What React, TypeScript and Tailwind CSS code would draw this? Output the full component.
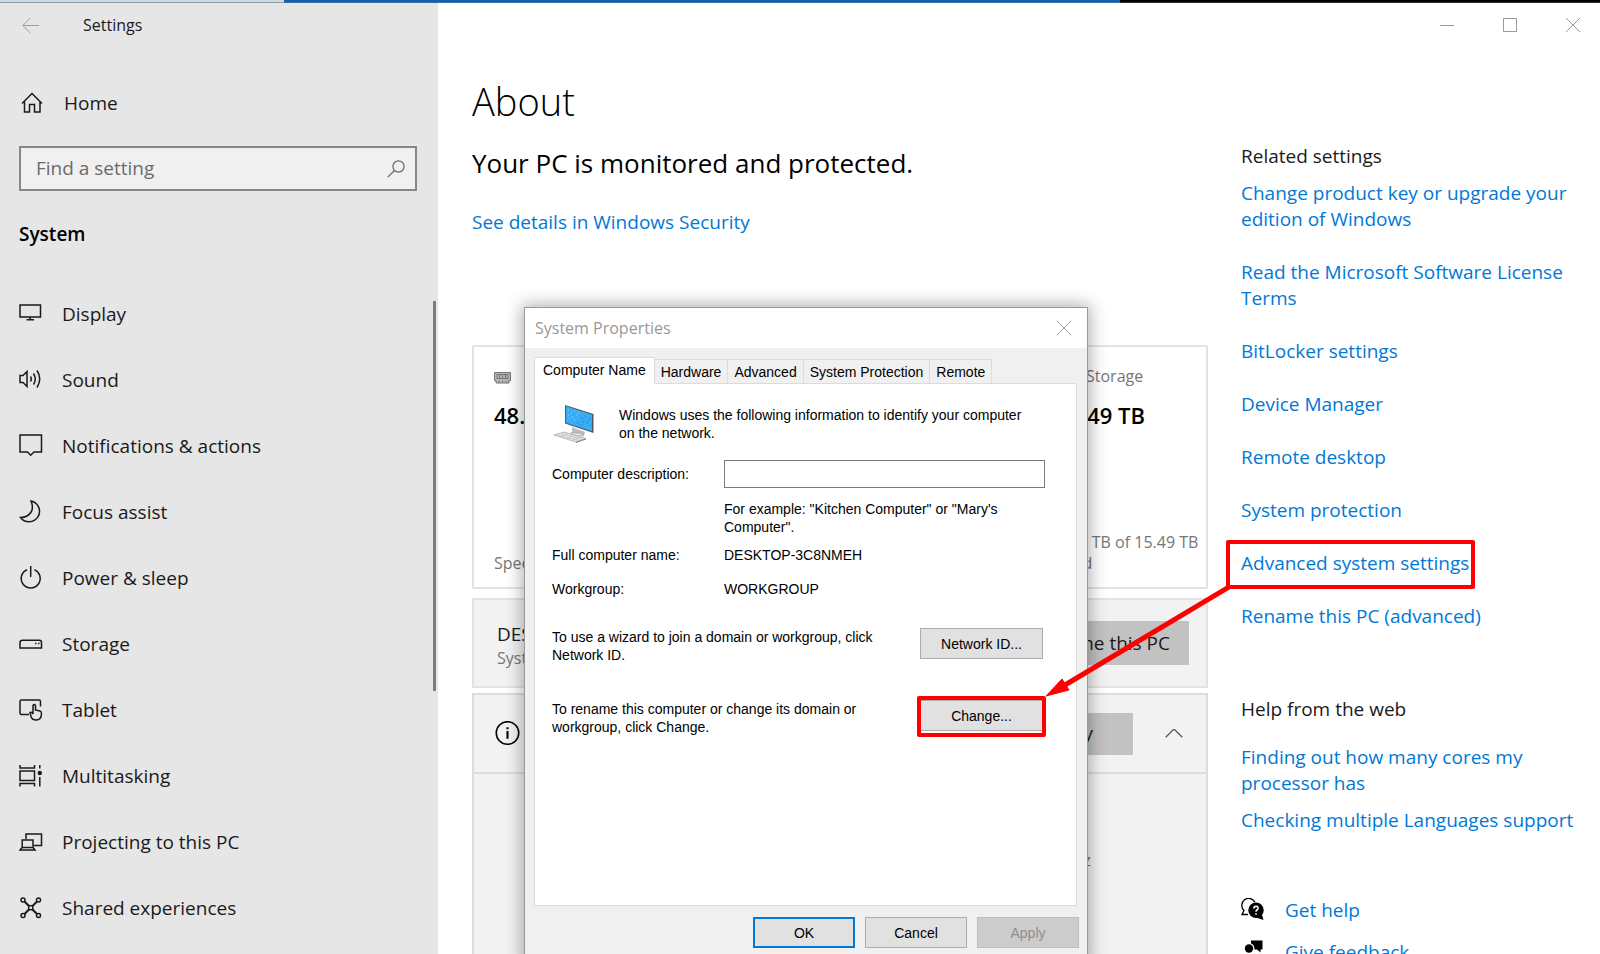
import type { ReactNode } from "react";

const stroke = {
  fill: "none",
  stroke: "currentColor",
  strokeWidth: 1.5,
} as const;

function Icon({ children, size = "size-6" }: { children: ReactNode; size?: string }) {
  return (
    <svg viewBox="0 0 24 24" className={`${size} shrink-0`} aria-hidden="true" {...stroke}>
      {children}
    </svg>
  );
}

const navItems: { label: string; icon: ReactNode }[] = [
  {
    label: "Display",
    icon: <path d="M1 3H21.500V15H1ZM11.200 15V17.500M7.500 17.700H15" />,
  },
  {
    label: "Sound",
    icon: (
      <path d="M1 7.500H4L8 3.500V18.500L4 14.500H1ZM11.500 8.500Q13 11 11.500 13.500M14.500 5.500Q18 11 14.500 16.500M18 2.500Q23.500 11 18 19.500" />
    ),
  },
  {
    label: "Notifications & actions",
    icon: <path d="M1 1H22.500V18H15L11.700 21.300L8.500 18H1Z" />,
  },
  {
    label: "Focus assist",
    icon: <path d="M12 1A10.500 10.500 0 1 1 1.500 17.500Q9 17.500 12.500 11.500Q14.500 6.500 12 1Z" />,
  },
  {
    label: "Power & sleep",
    icon: <path d="M11.700 0V11M8 3.700A9.500 9.500 0 1 0 15.400 3.700" />,
  },
  {
    label: "Storage",
    icon: (
      <>
        <path d="M1 16V10.500Q1 8.200 3.500 8.200H20.500Q22.500 8.200 22.500 10.500V16Z" />
        <path d="M16 11.500H17.500M19 11.500H20.500" />
      </>
    ),
  },
  {
    label: "Tablet",
    icon: (
      <>
        <path d="M10 16.500H2.500Q1 16.500 1 15V3.500Q1 2 2.500 2H20Q21.500 2 21.500 3.500V8.500" />
        <path d="M14 16V7.500Q15.200 5.500 16.500 7.500V12L21 13Q22.500 13.500 22.500 15.500Q22.500 22 17 22Q13 22 12 18.500L11 14.500Q12.500 13.500 14 16" />
      </>
    ),
  },
  {
    label: "Multitasking",
    icon: (
      <>
        <path d="M1 1V4H15.500V1M1 7H15.500V16.500H1ZM1 22.500V19.500H15.500V22.500M20.800 1V4.500M20.800 13V22.500" />
        <circle cx="20.800" cy="9" r="2.200" fill="currentColor" stroke="none" />
      </>
    ),
  },
  {
    label: "Projecting to this PC",
    icon: (
      <path d="M7 9V4H22.500V15.500H15M3.200 10H14V17.500H3.200ZM3.200 17.500L1 20H16L14 17.500" />
    ),
  },
  {
    label: "Shared experiences",
    icon: (
      <>
        <path d="M5.500 5.500L10 10M18 5.500L13.500 10M5.500 18L10 13.500M18 18L13.500 13.500" strokeWidth="2" />
        <rect x="9.700" y="9.700" width="4" height="4" />
        <circle cx="4" cy="4" r="2" />
        <circle cx="19.500" cy="4" r="2" />
        <circle cx="4" cy="19.500" r="2" />
        <circle cx="19.500" cy="19.500" r="2" />
      </>
    ),
  },
];

const relatedBefore = [
  "Change product key or upgrade your edition of Windows",
  "Read the Microsoft Software License Terms",
  "BitLocker settings",
  "Device Manager",
  "Remote desktop",
  "System protection",
];

function TextLink({ children }: { children: ReactNode }) {
  return (
    <a href="#" className="text-[#0078d7]">
      {children}
    </a>
  );
}

function Sidebar() {
  return (
    <aside className="relative flex w-[438px] shrink-0 flex-col bg-[#e6e6e6] text-[19px] text-[#1a1a1a]">
      <div className="flex h-11 items-center gap-11 pl-[22px] text-[16px]">
        <button type="button" aria-label="Back" className="text-[#a0a0a0]">
          <svg viewBox="0 0 17 17" className="size-[17px]" {...stroke} strokeWidth="1">
            <path d="M17 8.500H.8M8.500 .8L.8 8.500L8.500 16.200" />
          </svg>
        </button>
        <span>Settings</span>
      </div>
      <a href="#" className="mt-10 flex h-8 items-center gap-5 pl-5">
        <Icon>
          <path d="M2 12.500L12 2.500L22 12.500M4.500 10.500V21H9.500V13.500H14.500V21H20V10.500" />
        </Icon>
        Home
      </a>
      <div className="mt-[27px] mr-[21px] ml-[19px] flex h-[45px] shrink-0 items-center border-2 border-[#878787] bg-[#f0f0f0] px-[15px]">
        <input
          aria-label="Find a setting"
          placeholder="Find a setting"
          className="min-w-0 flex-1 bg-transparent outline-none placeholder:text-[#6b6b6b]"
        />
        <svg viewBox="0 0 18 18" className="-mr-[5px] size-[18px] text-[#666]" {...stroke} strokeWidth="1.200">
          <circle cx="11.500" cy="6.500" r="5.600" />
          <path d="M7.500 10.500L.8 17.200" />
        </svg>
      </div>
      <h2 className="mt-[27px] pl-[19px] text-[19px] leading-8 font-semibold text-black">System</h2>
      <nav className="mt-[31px] flex flex-col">
        {navItems.map((item) => (
          <a key={item.label} href="#" className="flex h-[66px] shrink-0 items-center gap-[19px] pl-[19px]">
            <Icon>{item.icon}</Icon>
            {item.label}
          </a>
        ))}
      </nav>
      <div className="absolute top-[298px] right-[2px] h-[390px] w-[3px] bg-[#7d7d7d]" />
    </aside>
  );
}

function WindowButtons() {
  return (
    <div className="flex h-11 items-center justify-end gap-[49px] pr-5 text-[#999]">
      <button type="button" aria-label="Minimize">
        <svg viewBox="0 0 14 14" className="size-[14px]" {...stroke} strokeWidth="1">
          <path d="M0 7.500H14" />
        </svg>
      </button>
      <button type="button" aria-label="Maximize">
        <svg viewBox="0 0 14 14" className="size-[14px]" {...stroke} strokeWidth="1">
          <path d="M.5 .5H13.500V13.500H.5Z" />
        </svg>
      </button>
      <button type="button" aria-label="Close">
        <svg viewBox="0 0 14 14" className="size-[14px]" {...stroke} strokeWidth="1">
          <path d="M0 0L14 14M14 0L0 14" />
        </svg>
      </button>
    </div>
  );
}

function DeviceCards() {
  return (
    <>
      <section className="mt-[110px] flex h-[244px] shrink-0 justify-between rounded-[2px] border-2 border-[#e3e3e3] pl-5 text-[16px] leading-[21px] text-[#767676]">
        <div className="flex flex-col pt-[19px] pb-[13px]">
          <svg viewBox="0 0 17 12" className="mt-[6px] h-3 w-[17px]" fill="none" stroke="#777">
            <path d="M.5 .5H16.500V8.500H15V11H2V8.500H.5Z" fill="#b5b5b5" />
            <path d="M3 2.500H14V6.500H3ZM5.500 3V6M8.500 3V6M11.500 3V6M5 11V9M8.500 11V9M12 11V9" />
          </svg>
          <strong className="mt-[15px] text-[22px] leading-8 font-semibold text-black">48.0 GB</strong>
          <span className="mt-auto">Speed</span>
        </div>
        <div className="flex w-[150px] flex-col pt-[19px] pb-[13px]">
          <span className="pl-[30px]">Storage</span>
          <strong className="mt-3 text-[22px] leading-8 font-semibold text-black">15.49 TB</strong>
          <span className="mt-auto whitespace-nowrap">
            9.14 TB of 15.49 TB
            <br />
            used
          </span>
        </div>
      </section>
      <section className="mt-[9px] flex h-[90px] shrink-0 items-center justify-between border-2 border-[#e3e3e3] bg-[#f2f2f2] pr-[17px] pl-[23px]">
        <div className="pt-[6px] text-[16px] leading-6 text-[#767676]">
          <div className="text-[19px] text-[#1a1a1a]">DESKTOP-3C8NMEH</div>
          System
        </div>
        <button type="button" className="h-11 bg-[#c2c2c2] px-[19px] text-[19px] text-[#1a1a1a]">
          Rename this PC
        </button>
      </section>
      <section className="mt-[5px] flex flex-1 flex-col border-2 border-b-0 border-[#dcdcdc] bg-[#f2f2f2]">
        <div className="flex h-[79px] shrink-0 items-center border-b-2 border-[#dcdcdc] pr-[23px] pl-[21px]">
          <Icon size="size-[25px]">
            <circle cx="12" cy="11.500" r="10.800" />
            <path d="M12 9.500V17M12 6V8" strokeWidth="2" />
          </Icon>
          <button type="button" className="ml-auto h-[42px] bg-[#c2c2c2] px-10 text-[19px] text-[#1a1a1a]">
            Copy
          </button>
          <svg viewBox="0 0 18 10" aria-hidden="true" className="ml-8 h-[10px] w-[18px] text-[#555]" {...stroke}>
            <path d="M.7 8.300L9 0L17.300 8.300" strokeWidth="1.300" />
          </svg>
        </div>
        <div className="mt-[73px] pr-[115px] text-right text-[17px] text-[#767676]">GHz</div>
      </section>
    </>
  );
}

function RelatedSettings() {
  return (
    <aside className="flex w-[341px] shrink-0 flex-col text-[19px] leading-[26px] text-[#1a1a1a]">
      <h2 className="mt-24">Related settings</h2>
      <ul className="mt-[11px] flex flex-col gap-[27px]">
        {relatedBefore.map((label) => (
          <li key={label}>
            <TextLink>{label}</TextLink>
          </li>
        ))}
        <li className="relative">
          <TextLink>Advanced system settings</TextLink>
          <span className="absolute -top-[10px] -left-[15px] h-[49px] w-[249px] rounded-[2px] border-4 border-[#ff0000]" />
        </li>
        <li>
          <TextLink>Rename this PC (advanced)</TextLink>
        </li>
      </ul>
      <h2 className="mt-[67px]">Help from the web</h2>
      <ul className="mt-[22px] flex flex-col gap-[11px]">
        <li>
          <TextLink>Finding out how many cores my processor has</TextLink>
        </li>
        <li>
          <TextLink>Checking multiple Languages support</TextLink>
        </li>
      </ul>
      <div className="mt-[64px] flex items-center gap-5">
        <svg viewBox="0 0 24 24" aria-hidden="true" className="size-6 text-black">
          <path d="M14 4.200A7 7 0 1 0 3 12.500L1 16.500H7" {...stroke} strokeWidth="1.300" />
          <circle cx="15" cy="12.200" r="7.700" fill="currentColor" />
          <path d="M15 19.500L22.500 22L20.500 15Z" fill="currentColor" />
          <path d="M12.800 10.500Q12.900 8.200 15 8.200Q17.200 8.300 17.100 10.200Q17 11.200 15.900 12Q15 12.600 15 13.800M15 15.200V16.800" fill="none" stroke="#fff" strokeWidth="1.600" />
        </svg>
        <TextLink>Get help</TextLink>
      </div>
      <div className="mt-4 flex items-center gap-5">
        <svg viewBox="0 0 24 24" aria-hidden="true" className="size-6 text-black" fill="currentColor">
          <circle cx="8" cy="8.500" r="4.200" />
          <path d="M10 .5H21.500V9.500H19.500V12.500L16 9.500H13.500Q13.500 4.500 10 3.500ZM1 22Q1 15 8 15Q15 15 15 22Z" />
        </svg>
        <TextLink>Give feedback</TextLink>
      </div>
    </aside>
  );
}

const pushButton = "border border-[#adadad] bg-[#e1e1e1] text-center text-black";

function ComputerIcon() {
  return (
    <svg viewBox="0 0 40 40" aria-hidden="true" className="size-10 shrink-0">
      <path d="M18 22L31 27L30 31Q24 32 18 28Z" fill="#b9bec3" />
      <path d="M17 27.500L30 28.500L26 31.500L17 29.500Z" fill="#dfe2e5" stroke="#8b9095" strokeWidth=".5" />
      <path d="M11 0L39.500 9V28L11 18.500Z" fill="#4d5863" />
      <path d="M12 1.300L38 9.800V26.200L12 17.800Z" fill="#38adf7" />
      <path d="M14 5H15M17 8H18M20 6H21M14 10H15M18 12H19M22 10H23M15 14H16M20 15H21M24 7.500H25" stroke="#9ed7fb" />
      <path d="M27 13H28M31 11H32M35 14H36M29 17H30M33 18H34M26 20H27M36 20H37M23 18H24" stroke="#1c6fb0" />
      <path d="M0 30L10 27L32 33.500L22 37Z" fill="#e4e6e8" stroke="#9da1a5" strokeWidth=".7" />
      <path d="M4 30L25 35.500M8 28.800L28.500 34.500M7 31.500L13 28.500M13 33.500L19 30.500M19 35L25 32" stroke="#b5b9bd" strokeWidth=".6" />
      <path d="M22 37L32 33.500V34.500L22 38Z" fill="#7b8085" />
    </svg>
  );
}

function SystemProperties() {
  return (
    <div
      role="dialog"
      aria-label="System Properties"
      className="absolute top-[307px] left-[524px] flex h-[660px] w-[564px] flex-col border border-[#9a9a9a] bg-[#f0f0f0] font-['Liberation_Sans',Arial,sans-serif] text-[14px] leading-[18px] text-black shadow-[0_0_16px_2px_rgba(0,0,0,0.32)]"
    >
      <div className="flex h-10 shrink-0 items-center justify-between bg-white pr-4 pl-[10px] font-['Open_Sans','Noto_Sans',sans-serif] text-[16px] text-[#999]">
        <span>System Properties</span>
        <button type="button" aria-label="Close">
          <svg viewBox="0 0 14 14" className="size-[14px]" {...stroke} strokeWidth="1">
            <path d="M0 0L14 14M14 0L0 14" />
          </svg>
        </button>
      </div>
      <div role="tablist" className="mt-[9px] flex items-end pl-[9px]">
        <button type="button" role="tab" aria-selected="true" className="relative z-10 -mb-px h-[27px] border border-b-0 border-[#dcdcdc] bg-white px-2 pb-[3px]">
          Computer Name
        </button>
        {["Hardware", "Advanced", "System Protection", "Remote"].map((tab) => (
          <button key={tab} type="button" role="tab" aria-selected="false" className="h-6 border-t border-r border-[#dcdcdc] px-[6px]">
            {tab}
          </button>
        ))}
      </div>
      <div className="mr-[10px] ml-[9px] flex h-[523px] shrink-0 flex-col border border-[#dcdcdc] bg-white pr-[31px] pl-[17px]">
        <div className="mt-[21px] flex gap-[25px] pl-[2px]">
          <ComputerIcon />
          <p className="pt-px">
            Windows uses the following information to identify your computer
            <br />
            on the network.
          </p>
        </div>
        <div className="mt-[15px] flex items-center">
          <label htmlFor="computer-description" className="w-[172px]">
            Computer description:
          </label>
          <input id="computer-description" className="h-7 min-w-0 flex-1 border border-[#7a7a7a] bg-white px-1" />
        </div>
        <p className="mt-3 pl-[172px]">
          For example: "Kitchen Computer" or "Mary's
          <br />
          Computer".
        </p>
        <dl className="mt-[10px] grid grid-cols-[172px_1fr] gap-y-4">
          <dt>Full computer name:</dt>
          <dd>DESKTOP-3C8NMEH</dd>
          <dt>Workgroup:</dt>
          <dd>WORKGROUP</dd>
        </dl>
        <div className="mt-[30px] flex items-start justify-between pr-[2px]">
          <p>
            To use a wizard to join a domain or workgroup, click
            <br />
            Network ID.
          </p>
          <button type="button" className={`h-[31px] w-[123px] ${pushButton}`}>
            Network ID...
          </button>
        </div>
        <div className="mt-[36px] flex items-start justify-between pr-[2px]">
          <p>
            To rename this computer or change its domain or
            <br />
            workgroup, click Change.
          </p>
          <div className="relative">
            <button type="button" className={`h-[31px] w-[123px] ${pushButton}`}>
              Change...
            </button>
            <span className="absolute -top-1 -left-[3px] h-[41px] w-[129px] rounded-[2px] border-4 border-[#ff0000]" />
          </div>
        </div>
      </div>
      <div className="mt-[11px] flex justify-end gap-[10px] pr-2">
        <button type="button" className="h-[31px] w-[102px] border-2 border-[#0078d7] bg-[#e1e1e1]">
          OK
        </button>
        <button type="button" className={`h-[31px] w-[102px] ${pushButton}`}>
          Cancel
        </button>
        <button type="button" disabled className="h-[31px] w-[102px] border border-[#bfbfbf] bg-[#cccccc] text-[#8f8f8f]">
          Apply
        </button>
      </div>
    </div>
  );
}

export default function App() {
  return (
    <div className="relative flex h-screen flex-col overflow-hidden bg-white font-['Open_Sans','Noto_Sans',sans-serif]">
      <div className="flex h-[3px] shrink-0">
        <div className="w-[284px] border-b border-[#999] bg-[#c9dbe8]" />
        <div className="w-[836px] border-b border-[#3f6da3] bg-[#1160ae]" />
        <div className="flex-1 border-b border-[#333] bg-black" />
      </div>
      <div className="flex min-h-0 flex-1">
        <Sidebar />
        <main className="flex min-w-0 flex-1 flex-col pl-[34px]">
          <WindowButtons />
          <div className="flex min-h-0 flex-1 gap-[33px] pr-[18px]">
            <div className="flex min-w-0 flex-1 flex-col">
              <h1 className="mt-7 text-[38px] leading-[52px] font-light text-black">About</h1>
              <p className="mt-[18px] text-[26px] leading-[36px] text-black">Your PC is monitored and protected.</p>
              <p className="mt-[28px] text-[19px] leading-[26px]">
                <TextLink>See details in Windows Security</TextLink>
              </p>
              <DeviceCards />
            </div>
            <RelatedSettings />
          </div>
        </main>
      </div>
      <SystemProperties />
      <svg viewBox="0 0 184 112" aria-hidden="true" className="pointer-events-none absolute top-[586px] left-[1046px] h-28 w-[184px]">
        <path d="M183 1L14 102" stroke="#ff0000" strokeWidth="5" />
        <path d="M0 110L16 93L23 104Z" fill="#ff0000" stroke="#ff0000" />
      </svg>
    </div>
  );
}
